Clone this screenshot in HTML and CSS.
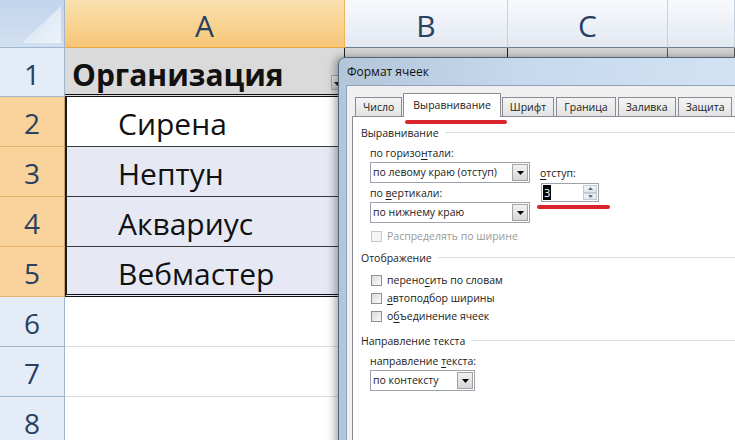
FILE: index.html
```html
<!DOCTYPE html>
<html lang="ru">
<head>
<meta charset="utf-8">
<title>Формат ячеек</title>
<link rel="stylesheet" href="styles.css">
</head>
<body>
<div class="sheet">
  <div class="corner"><svg width="40" height="37" viewBox="0 0 40 37"><defs><linearGradient id="tg" x1="0" y1="0" x2="1" y2="1"><stop offset="0" stop-color="#d3e0f0"/><stop offset="1" stop-color="#eef3f9"/></linearGradient></defs><path d="M39 0V37H0Z" fill="url(#tg)"/></svg></div>
  <div class="colh sel">A</div>
  <div class="colh">B</div>
  <div class="colh">C</div>
  <div class="colh"></div>

  <div class="rowh">1</div>
  <div class="cell a1"><span>Организация</span><span class="filter"><svg width="7" height="4" viewBox="0 0 7 4"><path d="M0 0h7L3.5 4z" fill="#222"/></svg></span></div>
  <div class="cell r1 dark"></div>
  <div class="cell r1"></div>
  <div class="cell r1"></div>

  <div class="rowh sel">2</div>
  <div class="cell data first">Сирена</div>
  <div class="cell"></div><div class="cell"></div><div class="cell"></div>

  <div class="rowh sel">3</div>
  <div class="cell data tint">Нептун</div>
  <div class="cell"></div><div class="cell"></div><div class="cell"></div>

  <div class="rowh sel">4</div>
  <div class="cell data tint">Аквариус</div>
  <div class="cell"></div><div class="cell"></div><div class="cell"></div>

  <div class="rowh sel">5</div>
  <div class="cell data tint last">Вебмастер</div>
  <div class="cell"></div><div class="cell"></div><div class="cell"></div>

  <div class="rowh">6</div>
  <div class="cell plain"></div>
  <div class="cell"></div><div class="cell"></div><div class="cell"></div>

  <div class="rowh">7</div>
  <div class="cell plain"></div>
  <div class="cell"></div><div class="cell"></div><div class="cell"></div>

  <div class="rowh">8</div>
  <div class="cell plain"></div>
  <div class="cell"></div><div class="cell"></div><div class="cell"></div>
</div>

<div class="dialog">
  <div class="titlebar">Формат ячеек</div>
  <div class="dlg-body">
    <div class="tabs">
      <div class="tab">Число</div>
      <div class="tab active">Выравнивание<span class="mark mark-tab"></span></div>
      <div class="tab">Шрифт</div>
      <div class="tab">Граница</div>
      <div class="tab">Заливка</div>
      <div class="tab">Защита</div>
    </div>
    <div class="panel">
      <div class="group"><span>Выравнивание</span><i class="rule"></i></div>
      <div class="align">
        <div class="col-left">
          <div class="lbl">по горизо<u>н</u>тали:</div>
          <div class="combo wide"><span class="ctext">по левому краю (отступ)</span><span class="cbtn"><svg width="7" height="4" viewBox="0 0 7 4"><path d="M0 0h7L3.5 4z" fill="#000"/></svg></span></div>
          <div class="lbl gap2">по <u>в</u>ертикали:</div>
          <div class="combo wide"><span class="ctext">по нижнему краю</span><span class="cbtn"><svg width="7" height="4" viewBox="0 0 7 4"><path d="M0 0h7L3.5 4z" fill="#000"/></svg></span></div>
        </div>
        <div class="col-right">
          <div class="lbl"><u>о</u>тступ:</div>
          <div class="spin">
            <span class="sval"><span class="hl">3</span></span>
            <span class="arrows">
              <span class="arr"><svg width="5" height="3" viewBox="0 0 5 3"><path d="M0 3h5L2.5 0z" fill="#5f6f84"/></svg></span>
              <span class="arr"><svg width="5" height="3" viewBox="0 0 5 3"><path d="M0 0h5L2.5 3z" fill="#5f6f84"/></svg></span>
            </span>
            <span class="mark mark-spin"></span>
          </div>
        </div>
      </div>
      <div class="check disabled first-check"><i class="box"></i><span>Распределять по ширине</span></div>

      <div class="group g2"><span>Отображение</span><i class="rule"></i></div>
      <div class="check c1"><i class="box"></i><span>перено<u>с</u>ить по словам</span></div>
      <div class="check"><i class="box"></i><span><u>а</u>втоподбор ширины</span></div>
      <div class="check"><i class="box"></i><span>о<u>б</u>ъединение ячеек</span></div>

      <div class="group g3"><span>Направление текста</span><i class="rule"></i></div>
      <div class="lbl sub">направление <u>т</u>екста:</div>
      <div class="combo narrow sub"><span class="ctext">по контексту</span><span class="cbtn"><svg width="7" height="4" viewBox="0 0 7 4"><path d="M0 0h7L3.5 4z" fill="#000"/></svg></span></div>
    </div>
  </div>
</div>
</body>
</html>
```

FILE: styles.css
```css
* { box-sizing: border-box; }
html, body { margin: 0; padding: 0; }
body {
  width: 735px;
  height: 440px;
  overflow: hidden;
  position: relative;
  background: #fff;
  font-family: "Open Sans", "Noto Sans", sans-serif;
}

/* ---------- spreadsheet ---------- */
.sheet {
  display: grid;
  grid-template-columns: 65px 280px 163px 160px 67px;
  grid-template-rows: 48px 49px repeat(7, 50px);
}
.corner {
  display: flex;
  justify-content: flex-end;
  align-items: flex-end;
  padding: 0 2px 4px 0;
  background: linear-gradient(#c2d5ec, #d2e0f1);
  border-right: 1px solid #9eb6ce;
  border-bottom: 1px solid #9eb6ce;
}
.colh {
  display: flex;
  align-items: center;
  justify-content: center;
  padding-top: 3px;
  font-size: 30px;
  color: #27415f;
  background: linear-gradient(#f7f9fc, #e3e9f2);
  border-right: 1px solid #c5d2e1;
  border-bottom: 1px solid #6f7f90;
}
.colh.sel {
  background: linear-gradient(#fae1b0, #f7c677);
  border-right-color: #f2b45a;
  border-bottom-color: #e9a848;
}
.rowh {
  display: flex;
  align-items: center;
  justify-content: center;
  padding-top: 3px;
  font-size: 28px;
  color: #27415f;
  background: #e4ecf7;
  border-right: 1px solid #9eb6ce;
  border-bottom: 1px solid #9eb6ce;
}
.rowh.sel {
  background: #f9d29c;
  border-bottom-color: #e5b16c;
  border-right-color: #c9a06a;
}
.cell {
  border-right: 1px solid #d4d8de;
  border-bottom: 1px solid #d4d8de;
  background: #fff;
}
.a1 {
  display: flex;
  align-items: flex-end;
  padding: 0 0 4px 7px;
  background: #dadada;
  font-weight: 700;
  font-size: 30px;
  line-height: 30px;
  color: #111;
  border-right: 1px solid #222;
  border-bottom: 3px double #111;
}
.filter {
  margin-left: auto;
  margin-right: 0;
  width: 13px;
  height: 15px;
  display: flex;
  align-items: flex-end;
  justify-content: center;
  padding-bottom: 3px;
  background: linear-gradient(#eaeaea, #c9c9c9);
  border: 1px solid #a9a9a9;
}
.r1 { background: #d4d4d4; border-right-color: #555; }
.r1.dark { border-right-color: #222; }
.data {
  display: flex;
  align-items: flex-end;
  padding: 0 0 7px 51px;
  font-size: 30px;
  line-height: 30px;
  color: #111;
  border-left: 2px solid #1a1a1a;
  border-right: 2px solid #1a1a1a;
  border-bottom: 1px solid #3a3a3a;
}
.data.tint { background: #e6e9f4; }
.data.last { border-bottom: 3px double #111; padding-bottom: 5px; }
.plain { border-bottom-color: #dcdcdc; }

/* ---------- dialog ---------- */
.dialog {
  position: absolute;
  left: 338px;
  top: 57px;
  width: 420px;
  height: 400px;
  display: flex;
  flex-direction: column;
  padding-left: 7px;
  border: 1px solid #56667a;
  border-radius: 7px 7px 0 0;
  background: linear-gradient(to right, #b3c5d9, #c7d9ee 45%, #d3e3f4);
  box-shadow: -3px 0 9px rgba(0, 0, 0, 0.35);
  font-size: 10.5px;
  color: #1b1b1b;
}
.titlebar {
  height: 27px;
  line-height: 28px;
  padding-left: 1px;
  font-size: 12px;
  color: #111;
}
.dlg-body {
  flex: 1;
  display: flex;
  flex-direction: column;
  padding: 7px 0 0 5px;
  background: #f0f0f0;
  border-top: 1px solid #8ea3bb;
  border-left: 1px solid #8ea3bb;
}
.tabs {
  display: flex;
  align-items: flex-end;
  height: 23px;
  padding-left: 3px;
}
.tab {
  height: 19px;
  line-height: 18px;
  padding: 0 7px;
  margin-right: 2px;
  background: linear-gradient(#f4f4f4, #e3e3e3);
  border: 1px solid #898c95;
  border-bottom: none;
  white-space: nowrap;
}
.tab.active {
  position: relative;
  z-index: 2;
  height: 24px;
  margin: 0 1px -1px -1px;
  padding: 1px 9px 0;
  line-height: 20px;
  background: #fff;
}
.mark {
  position: absolute;
  height: 4px;
  border-radius: 2px;
  background: #d9232d;
}
.mark-tab { left: 1px; top: 26px; width: 102px; }

.panel {
  flex: 1;
  padding: 8px 0 0 8px;
  background: #fff;
  border: 1px solid #898c95;
  border-right: none;
  border-bottom: none;
}
.group {
  display: flex;
  align-items: center;
  height: 16px;
  line-height: 16px;
}
.group .rule {
  flex: 1;
  height: 2px;
  margin-left: 6px;
  border-top: 1px solid #d5dfe5;
  border-bottom: 1px solid #fff;
}
.g2 { margin-top: 6px; }
.g3 { margin-top: 8px; }
.lbl { height: 16px; line-height: 16px; white-space: nowrap; }
.lbl.gap2 { margin-top: 2px; }
.sub { margin-left: 9px; }
.lbl.sub { margin-top: 4px; }
u { text-decoration-thickness: 1px; text-underline-offset: 2px; }

.align {
  display: flex;
  gap: 10px;
  margin: 4px 0 0 9px;
}
.combo {
  display: flex;
  align-items: stretch;
  height: 21px;
  margin-top: 1px;
  border: 1px solid #9da3ab;
  background: #fff;
}
.combo.wide { width: 160px; }
.combo.narrow { width: 105px; }
.ctext {
  flex: 1;
  padding-left: 2px;
  line-height: 19px;
  white-space: nowrap;
  overflow: hidden;
}
.cbtn {
  width: 16px;
  margin: 1px;
  display: flex;
  align-items: center;
  justify-content: center;
  background: linear-gradient(#f2f2f2, #d6d6d6);
  border: 1px solid #a3a3a3;
}
.col-right { padding-top: 20px; }
.spin {
  position: relative;
  display: flex;
  width: 58px;
  height: 19px;
  margin: 2px 0 0 1px;
  border: 1px solid #9da3ab;
  background: #fff;
}
.sval { flex: 1; padding: 1px 0 0 1px; }
.hl {
  display: inline-block;
  height: 15px;
  line-height: 15px;
  padding: 0 1px;
  background: #000;
  color: #fff;
  font-size: 11px;
}
.arrows {
  display: flex;
  flex-direction: column;
  width: 14px;
  margin: 1px;
}
.arr {
  flex: 1;
  display: flex;
  align-items: center;
  justify-content: center;
  background: linear-gradient(#f3f6fa, #dfe6ee);
  border: 1px solid #c3cad3;
}
.mark-spin { left: -5px; top: 21px; width: 73px; }

.check {
  display: flex;
  align-items: center;
  gap: 5px;
  height: 18px;
  margin-left: 10px;
  white-space: nowrap;
}
.check .box {
  width: 11px;
  height: 11px;
  border: 1px solid #8e8f8f;
  background: linear-gradient(135deg, #d9dbdd, #fbfbfb);
}
.check.disabled { color: #9a9a9a; height: 16px; margin-top: 5px; }
.check.disabled .box { border-color: #c7c7c7; background: #f5f5f5; }
.check.c1 { margin-top: 5px; }
```
